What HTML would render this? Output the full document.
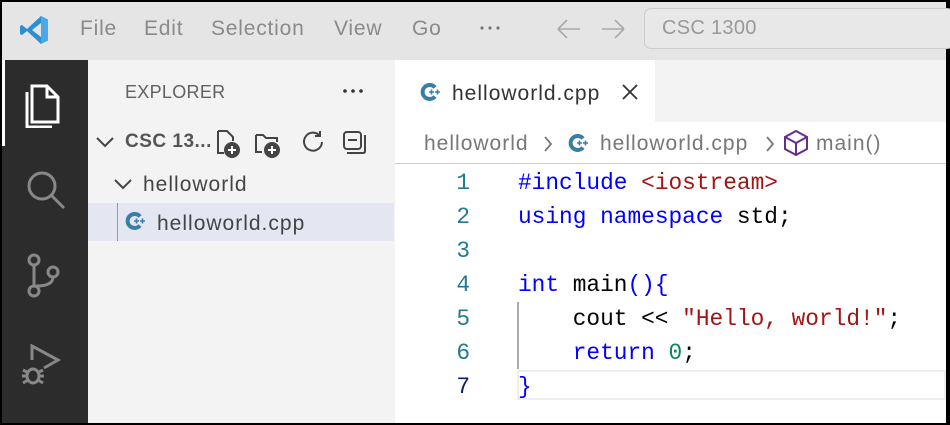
<!DOCTYPE html>
<html><head><style>
*{margin:0;padding:0;box-sizing:border-box}
body{width:950px;height:425px;overflow:hidden;background:#000;position:relative;font-family:"Liberation Sans",sans-serif}
.abs{position:absolute}
#title{left:2px;top:2px;width:944px;height:58px;background:#e5e5e5}
.menu{top:17px;font-size:21px;color:#8a8a8a;letter-spacing:0.8px}
#act{left:2px;top:60px;width:86px;height:363px;background:#2c2c2c}
#side{left:88px;top:60px;width:307px;height:363px;background:#f3f3f3}
#ed{left:395px;top:60px;width:551px;height:363px;background:#fff}
#tabs{left:395px;top:60px;width:551px;height:62px;background:#f3f3f3}
#tab{left:395px;top:60px;width:260px;height:62px;background:#fff}
.t{color:#444;font-size:21px;white-space:nowrap;letter-spacing:1px}
.code{font-family:"Liberation Mono",monospace;font-size:22.8px;white-space:pre;color:#000}
.ln{font-family:"Liberation Mono",monospace;font-size:22.8px;color:#237893;width:40px;text-align:right;left:430px}
.kw{color:#0000ff}.st{color:#a31515}.nm{color:#098658}
</style></head><body>
<svg width="0" height="0" style="position:absolute"><defs><symbol id="cpp" viewBox="0 0 22 22"><path d="M15 6.5 A7 7 0 1 0 15 15.5" fill="none" stroke="#3a7ea6" stroke-width="4"/><path d="M9 11 H14 M11.5 8.5 V13.5 M15 11 H20 M17.5 8.5 V13.5" stroke="#3a7ea6" stroke-width="1.6"/></symbol></defs></svg>
<div id="title" class="abs"></div>
<svg class="abs" style="left:18px;top:14px" width="32" height="32" viewBox="0 0 32 32"><path d="M23 2 L30 5.5 V26.5 L23 30 L9 17 L4 21 L2 20 V12 L4 11 L9 15 Z" fill="#2b8fd6"/><path d="M23 9 L14 16 L23 23 Z" fill="#e5e5e5"/><path d="M23 2 L30 5.5 V26.5 L23 30Z" fill="#4ba9e8"/></svg>
<div class="abs menu" style="left:80px">File</div>
<div class="abs menu" style="left:144px">Edit</div>
<div class="abs menu" style="left:211px">Selection</div>
<div class="abs menu" style="left:334px">View</div>
<div class="abs menu" style="left:412px">Go</div>
<svg class="abs" style="left:480px;top:26px" width="20" height="4"><circle cx="2" cy="2" r="1.6" fill="#777"/><circle cx="10" cy="2" r="1.6" fill="#777"/><circle cx="18" cy="2" r="1.6" fill="#777"/></svg>
<svg class="abs" style="left:556px;top:18px" width="70" height="22" fill="none" stroke="#aaa" stroke-width="1.6"><path d="M2 11 H24 M2 11 L11 2 M2 11 L11 20 M46 11 H68 M68 11 L59 2 M68 11 L59 20"/></svg>
<div class="abs" style="left:644px;top:8px;width:310px;height:41px;border:1px solid #ccc;border-radius:7px;background:#e8e8e8"></div>
<div class="abs menu" style="left:662px;top:17px;font-size:20px;color:#999;letter-spacing:0.3px">CSC 1300</div>

<div id="act" class="abs"></div>
<div class="abs" style="left:2px;top:60px;width:3px;height:86px;background:#fff"></div>
<svg class="abs" style="left:22px;top:78px" width="44" height="50" viewBox="0 0 44 50" fill="none" stroke="#fff" stroke-width="3"><path d="M10 8 H25 L36 19 V44 H10 Z"/><path d="M25 8 V19 H36"/><path d="M5 14 V49 H30"/></svg>
<svg class="abs" style="left:24px;top:168px" width="42" height="42" viewBox="0 0 42 42" fill="none" stroke="#888" stroke-width="3"><circle cx="18" cy="18" r="13"/><path d="M27 27 L40 40"/></svg>
<svg class="abs" style="left:24px;top:250px" width="40" height="50" viewBox="0 0 40 50" fill="none" stroke="#888" stroke-width="3"><circle cx="10" cy="10" r="5"/><circle cx="10" cy="41" r="5"/><circle cx="29" cy="22" r="5"/><path d="M10 15 V36 M29 27 Q29 36 12 36"/></svg>
<svg class="abs" style="left:20px;top:344px" width="44" height="44" viewBox="0 0 44 44" fill="none" stroke="#888" stroke-width="3"><path d="M12 16 V2 L38 16 L24 24"/><ellipse cx="13" cy="32" rx="6" ry="7"/><path d="M3 26 L7 28 M23 26 L19 28 M2 32 H7 M19 32 H24 M3 39 L8 36 M23 39 L18 36"/></svg>

<div id="side" class="abs"></div>
<div class="abs t" style="left:125px;top:82px;font-size:18px;color:#616161;letter-spacing:0.3px">EXPLORER</div>
<svg class="abs" style="left:343px;top:89px" width="20" height="4"><circle cx="2" cy="2" r="1.8" fill="#333"/><circle cx="10" cy="2" r="1.8" fill="#333"/><circle cx="18" cy="2" r="1.8" fill="#333"/></svg>
<svg class="abs" style="left:96px;top:136px" width="18" height="12" viewBox="0 0 18 12" fill="none" stroke="#444" stroke-width="2"><path d="M1 2 L9 10 L17 2"/></svg>
<div class="abs t" style="left:125px;top:131px;font-size:19px;font-weight:bold;color:#555;letter-spacing:0.5px">CSC 13...</div>
<svg class="abs" style="left:214px;top:128px" width="180" height="30" viewBox="0 0 180 30" fill="none" stroke="#444" stroke-width="2"><path d="M4 3 H13 L19 9 V13 M4 3 V25 H10"/><circle cx="18" cy="22" r="7" fill="#444"/><path d="M18 18 V26 M14 22 H22" stroke="#fff"/><path d="M42 7 H49 L52 10 H63 V14 M42 7 V24 H48"/><circle cx="58" cy="22" r="7" fill="#444"/><path d="M58 18 V26 M54 22 H62" stroke="#fff"/><path d="M106 8 A9 9 0 1 0 108 14 M106 3 V8 H101"/><rect x="130" y="4" width="17" height="17" rx="3"/><path d="M134 12 H143 M133 25 H149 Q151 25 151 23 V7"/></svg>
<svg class="abs" style="left:114px;top:178px" width="18" height="12" viewBox="0 0 18 12" fill="none" stroke="#444" stroke-width="2"><path d="M1 2 L9 10 L17 2"/></svg>
<div class="abs t" style="left:143px;top:173px">helloworld</div>
<div class="abs" style="left:88px;top:203px;width:306px;height:38px;background:#e4e6f1"></div>
<div class="abs" style="left:117px;top:203px;width:1px;height:38px;background:#999"></div>
<svg class="abs" style="left:125px;top:210px" width="22" height="22"><use href="#cpp"/></svg>
<div class="abs t" style="left:157px;top:212px">helloworld.cpp</div>

<div id="ed" class="abs"></div>
<div id="tabs" class="abs"></div>
<div id="tab" class="abs"></div>
<svg class="abs" style="left:420px;top:81px" width="22" height="22"><use href="#cpp"/></svg>
<div class="abs t" style="left:452px;top:82px;color:#333">helloworld.cpp</div>
<svg class="abs" style="left:622px;top:84px" width="16" height="16" viewBox="0 0 16 16" stroke="#333" stroke-width="1.8"><path d="M1 1 L15 15 M15 1 L1 15"/></svg>
<div class="abs t" style="left:424px;top:132px;color:#777">helloworld</div>
<svg class="abs" style="left:543px;top:136px" width="10" height="16" fill="none" stroke="#777" stroke-width="1.8"><path d="M2 1 L8 8 L2 15"/></svg>
<svg class="abs" style="left:568px;top:132px" width="22" height="22"><use href="#cpp"/></svg>
<div class="abs t" style="left:600px;top:132px;color:#777">helloworld.cpp</div>
<svg class="abs" style="left:765px;top:136px" width="10" height="16" fill="none" stroke="#777" stroke-width="1.8"><path d="M2 1 L8 8 L2 15"/></svg>
<svg class="abs" style="left:783px;top:129px" width="26" height="28" viewBox="0 0 26 28" fill="none" stroke="#652d90" stroke-width="2"><path d="M13 2 L24 8 V20 L13 26 L2 20 V8 Z M2 8 L13 14 L24 8 M13 14 V26"/></svg>
<div class="abs t" style="left:816px;top:132px;color:#777">main()</div>
<div class="abs" style="left:395px;top:163px;width:551px;height:1px;background:#ccc"></div>

<div class="abs ln" style="top:170px">1</div>
<div class="abs ln" style="top:204px">2</div>
<div class="abs ln" style="top:238px">3</div>
<div class="abs ln" style="top:272px">4</div>
<div class="abs ln" style="top:306px">5</div>
<div class="abs ln" style="top:340px">6</div>
<div class="abs ln" style="top:374px;color:#0b216f">7</div>
<div class="abs" style="left:517px;top:370px;width:429px;height:30px;border:2px solid #eee"></div>
<div class="abs" style="left:517px;top:302px;width:1.5px;height:67px;background:#aaa"></div>
<div class="abs code" style="left:518px;top:170px"><span class="kw">#include</span> <span class="st">&lt;iostream&gt;</span></div>
<div class="abs code" style="left:518px;top:204px"><span class="kw">using</span> <span class="kw">namespace</span> std;</div>
<div class="abs code" style="left:518px;top:272px"><span class="kw">int</span> main<span class="kw">(){</span></div>
<div class="abs code" style="left:518px;top:306px">    cout &lt;&lt; <span class="st">"Hello, world!"</span>;</div>
<div class="abs code" style="left:518px;top:340px">    <span class="kw">return</span> <span class="nm">0</span>;</div>
<div class="abs code" style="left:518px;top:374px"><span class="kw">}</span></div>
</body></html>
